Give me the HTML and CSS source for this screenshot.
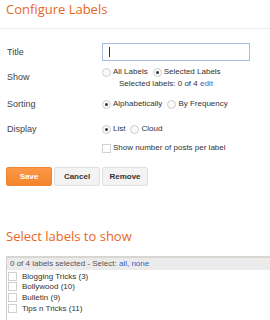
FILE: index.html
```
<!DOCTYPE html>
<html lang="en">
<head>
  <meta charset="UTF-8">
  <title>Configure Labels</title>
  <link rel="stylesheet" href="styles.css">
</head>
<body>
  <h2 class="page-title">Configure Labels</h2>

  <div class="form">
    <div class="row row-title">
      <div class="row-label">Title</div>
      <div class="text-box"><span class="caret"></span></div>
    </div>

    <div class="row row-show">
      <div class="row-label">Show</div>
      <div class="options">
        <div class="opt-line">
          <span class="radio"></span><span class="opt">All Labels</span>
          <span class="radio checked"></span><span class="opt">Selected Labels</span>
        </div>
        <div class="sub-line">Selected labels: 0 of 4 <a href="#">edit</a></div>
      </div>
    </div>

    <div class="row row-sorting">
      <div class="row-label">Sorting</div>
      <div class="opt-line">
        <span class="radio checked"></span><span class="opt">Alphabetically</span>
        <span class="radio"></span><span class="opt">By Frequency</span>
      </div>
    </div>

    <div class="row row-display">
      <div class="row-label">Display</div>
      <div class="opt-line">
        <span class="radio checked"></span><span class="opt">List</span>
        <span class="radio"></span><span class="opt">Cloud</span>
      </div>
    </div>

    <div class="row row-count">
      <div class="row-label"></div>
      <div class="opt-line">
        <span class="check"></span><span class="opt">Show number of posts per label</span>
      </div>
    </div>

    <div class="buttons">
      <button class="btn btn-save">Save</button>
      <button class="btn">Cancel</button>
      <button class="btn">Remove</button>
    </div>
  </div>

  <h2 class="page-title section-title">Select labels to show</h2>

  <div class="label-box">
    <div class="label-head">0 of 4 labels selected - Select: <a href="#">all</a>, <a href="#">none</a></div>
    <div class="label-item"><span class="check"></span>Blogging Tricks (3)</div>
    <div class="label-item"><span class="check"></span>Bollywood (10)</div>
    <div class="label-item"><span class="check"></span>Bulletin (9)</div>
    <div class="label-item"><span class="check"></span>Tips n Tricks (11)</div>
  </div>
  <div class="bottom-bar"></div>
</body>
</html>
```

FILE: styles.css
```
body { margin: 0; font-family: "Liberation Sans", Arial, sans-serif; color: #333; background: #fff; overflow: hidden; }
a { color: #3a62c0; text-decoration: none; }

.page-title {
  margin: 0;
  padding: 0 0 0 6px;
  height: 28px;
  font-family: "Open Sans", sans-serif;
  font-weight: normal;
  font-size: 13px;
  line-height: 18px;
  color: #e8671f;
  border-bottom: 1px solid #ececec;
  box-sizing: content-box;
}
.section-title {
  height: auto;
  line-height: 16px;
  border: none;
  margin-top: 42px;
}

.row { display: flex; }
.row-label { width: 95px; padding-left: 7px; font-size: 9px; line-height: 10px; color: #444; }

.row-title { margin-top: 14px; height: 18px; align-items: center; }
.text-box {
  width: 146px;
  height: 16px;
  border: 1px solid #a9bfe6;
  position: relative;
}
.caret {
  position: absolute;
  left: 6px;
  top: 3px;
  width: 1px;
  height: 10px;
  background: #333;
}

.row-show { margin-top: 6px; }
.row-show .row-label { padding-top: 5px; }
.sub-line { margin-top: 2px; padding-left: 17px; font-size: 8px; line-height: 10px; }

.row-sorting { margin-top: 10px; }
.row-display { margin-top: 15px; }
.row-count { margin-top: 9px; }

.opt-line { display: flex; align-items: center; height: 10px; font-size: 8px; }
.opt { margin-left: 2px; margin-right: 5px; line-height: 10px; }

.radio {
  width: 9px;
  height: 9px;
  box-sizing: border-box;
  border: 1px solid #cdcdcd;
  border-radius: 50%;
  background: #fafafa;
  position: relative;
}
.radio.checked::after {
  content: "";
  position: absolute;
  left: 2px;
  top: 2px;
  width: 3px;
  height: 3px;
  border-radius: 50%;
  background: #333;
}
.check {
  width: 9px;
  height: 9px;
  box-sizing: border-box;
  border: 1px solid #d0d0d0;
  background: #fff;
  flex: none;
}

.buttons { display: flex; gap: 2px; margin-top: 14px; padding-left: 6px; }
.btn {
  width: 46px;
  height: 19px;
  padding: 0;
  font-family: "Liberation Sans", Arial, sans-serif;
  font-size: 8px;
  font-weight: bold;
  color: #333;
  background: #f3f3f3;
  border: 1px solid #e0e0e0;
  border-radius: 2px;
}
.btn-save {
  color: #fff;
  background: linear-gradient(#fb9848, #f3842b);
  border-color: #f28430;
}

.label-box {
  margin-top: 12px;
  margin-left: 6px;
  height: 63px;
  border-left: 1px solid #cfcfcf;
  border-top: 2px solid #d9d6d2;
  font-size: 8px;
}
.label-head { height: 12px; line-height: 12px; padding-left: 3px; background: #ebebeb; color: #555; }
.label-item { display: flex; align-items: center; height: 10.6px; padding-left: 1px; }
.label-item .check { margin-right: 5px; }
.label-head + .label-item { margin-top: 1px; }

.bottom-bar { height: 3px; background: #1c2f45; }
```
